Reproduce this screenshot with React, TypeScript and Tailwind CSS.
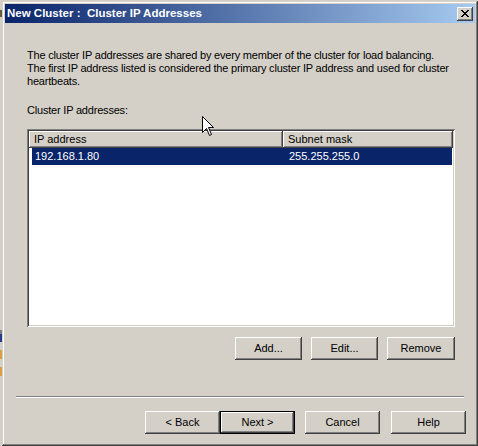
import React from "react";

const raised =
  "shadow-[inset_-1px_-1px_#404040,inset_1px_1px_#ffffff,inset_-2px_-2px_#808080,inset_2px_2px_#d4d0c8]";

type BtnProps = { label: string; w: string; isDefault?: boolean };

const WinButton: React.FC<BtnProps> = ({ label, w, isDefault }) => (
  <div
    className={`${w} h-[23px] bg-[#d4d0c8] flex items-center justify-center text-[11px] text-black ${
      isDefault ? "border border-black" : ""
    }`}
  >
    <div className={`w-full h-full flex items-center justify-center ${raised}`}>
      {label}
    </div>
  </div>
);

const HeaderCell: React.FC<{ label: string; w: string }> = ({ label, w }) => (
  <div
    className={`${w} h-[17px] bg-[#d4d0c8] pl-[5px] flex items-center shadow-[inset_-1px_-1px_#404040,inset_1px_1px_#ffffff,inset_-2px_-2px_#808080]`}
  >
    {label}
  </div>
);

const Cursor = () => (
  <svg
    className="absolute left-[202px] top-[116px]"
    width="13"
    height="21"
    viewBox="0 0 13 21"
  >
    <path
      d="M0.5 0.5 L0.5 16.5 L4.5 12.5 L7.5 19.5 L9.5 18.5 L6.5 11.5 L11.5 11.5 Z"
      fill="#ffffff"
      stroke="#000000"
      strokeWidth="1"
    />
  </svg>
);

export default function App() {
  return (
    <div
      className="w-[478px] h-[446px] bg-[#d4d0c8] flex overflow-hidden relative"
      style={{ fontFamily: '"Liberation Sans", Arial, sans-serif' }}
    >
      {/* sliver of the window behind */}
      <div className="w-[2px] h-full flex flex-col bg-[#d4d0c8]">
        <div className="h-[10px]" />
        <div className="h-[7px] bg-[#6b5a3a]" />
        <div className="flex-1" />
        <div className="h-[4px] bg-[#808080]" />
        <div className="h-[8px] bg-[#2a3a8a]" />
        <div className="h-[8px]" />
        <div className="h-[9px] bg-[#d8a040]" />
        <div className="h-[8px]" />
        <div className="h-[9px] bg-[#d8a040]" />
        <div className="h-[70px]" />
      </div>

      <div className="flex-1 mt-[1px] p-[3px] flex flex-col shadow-[inset_-1px_-1px_#404040,inset_1px_1px_#d4d0c8,inset_-2px_-2px_#808080,inset_2px_2px_#ffffff]">
        {/* title bar */}
        <div className="h-[19px] flex items-center justify-between bg-[linear-gradient(to_right,#0a246a,#a6caf0)] pl-[2px] pr-[2px]">
          <span className="text-white font-bold text-[11.5px] leading-none">
            New Cluster :&nbsp; Cluster IP Addresses
          </span>
          <div
            className={`w-[16px] h-[14px] bg-[#d4d0c8] flex items-center justify-center ${raised}`}
          >
            <svg width="8" height="7" viewBox="0 0 8 7">
              <path
                d="M0 0h2v1h1v1h2V1h1V0h2v1H7v1H6v1H5v1h1v1h1v1h1v1H6V6H5V5H3v1H2v1H0V6h1V5h1V4h1V3H2V2H1V1H0z"
                fill="#000"
              />
            </svg>
          </div>
        </div>

        {/* body */}
        <div className="flex-1 flex flex-col text-[11px] text-black leading-[13px]">
          <div className="pl-[22px] pr-[8px] pt-[26px] tracking-[-0.2px]">
            <p>
              The cluster IP addresses are shared by every member of the cluster
              for load balancing.
              <br />
              The first IP address listed is considered the primary cluster IP
              address and used for cluster
              <br />
              heartbeats.
            </p>
            <p className="mt-[16px]">Cluster IP addresses:</p>
          </div>

          {/* list view */}
          <div className="ml-[22px] mt-[12px] w-[428px] h-[198px] bg-white p-[2px] flex flex-col shadow-[inset_1px_1px_#808080,inset_-1px_-1px_#ffffff,inset_2px_2px_#404040,inset_-2px_-2px_#d4d0c8]">
            <div className="flex">
              <HeaderCell label="IP address" w="w-[254px]" />
              <HeaderCell label="Subnet mask" w="w-[170px]" />
            </div>
            <div className="ml-[3px] mr-[1px] h-[17px] bg-[#0a246a] text-white flex items-center">
              <span className="w-[254px] pl-[3px]">192.168.1.80</span>
              <span className="pl-[3px]">255.255.255.0</span>
            </div>
          </div>

          {/* list actions */}
          <div className="mt-[10px] flex justify-end gap-[9px] pr-[20px]">
            <WinButton label="Add..." w="w-[67px]" />
            <WinButton label="Edit..." w="w-[67px]" />
            <WinButton label="Remove" w="w-[68px]" />
          </div>

          {/* separator */}
          <div className="mt-[36px] mx-[11px] h-[2px] border-t border-[#808080] border-b border-b-white" />

          {/* wizard buttons */}
          <div className="mt-[13px] flex justify-end pr-[9px]">
            <WinButton label="< Back" w="w-[75px]" />
            <WinButton label="Next >" w="w-[75px]" isDefault />
            <div className="w-[10px]" />
            <WinButton label="Cancel" w="w-[75px]" />
            <div className="w-[11px]" />
            <WinButton label="Help" w="w-[75px]" />
          </div>
        </div>
      </div>

      <Cursor />
    </div>
  );
}
